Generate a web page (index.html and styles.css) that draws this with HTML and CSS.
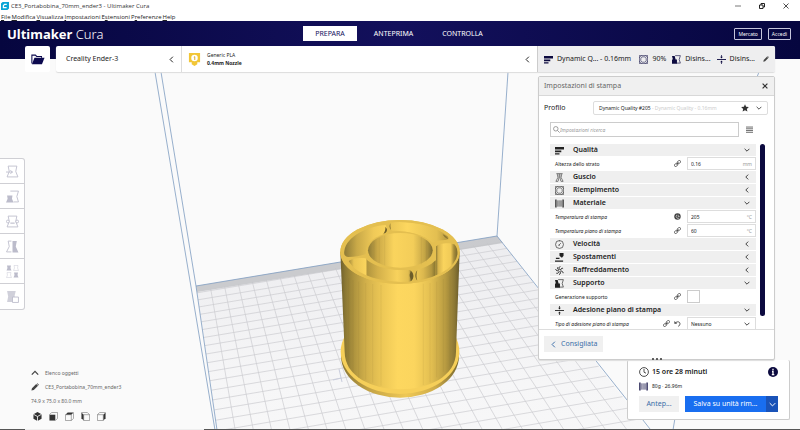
FILE: index.html
```html
<!DOCTYPE html>
<html lang="it">
<head>
    <meta charset="UTF-8">
    <meta name="viewport" content="width=device-width, initial-scale=1.0">
    <title>CE3_Portabobina_70mm_ender3 - Ultimaker Cura</title>
    <link rel="stylesheet" href="styles.css">
</head>
<body>
    <!-- Icons -->
    <svg class="sprite" aria-hidden="true">
        <symbol id="left" viewBox="0 0 10 10"><path d="M7 1 3 5l4 4" fill="none" stroke="currentColor" stroke-width="1.4"/></symbol>
        <symbol id="down" viewBox="0 0 10 10"><path d="M1 3l4 4 4-4" fill="none" stroke="currentColor" stroke-width="1.4"/></symbol>
        <symbol id="up" viewBox="0 0 10 10"><path d="M1 7l4-4 4 4" fill="none" stroke="currentColor" stroke-width="1.6"/></symbol>
        <symbol id="quality" viewBox="0 0 10 10"><path d="M0 1h10v3H0zM0 5h7v2H0zM0 8h5v1.500H0z" fill="currentColor"/></symbol>
        <symbol id="shell" viewBox="0 0 10 10"><path d="M1.500.7h7M2.500 1l.7 4L1 9.300h2.500M7.500 1l-.7 4L9 9.300H6.500M4.500 1v4l-1 4M5.500 1v4l1 4" fill="none" stroke="currentColor" stroke-width=".6"/></symbol>
        <symbol id="infill" viewBox="0 0 10 10"><path d="M.5.5h9v9h-9zM.5 3 3 .5M7 .5 9.500 3M.5 7 3 9.500M7 9.500 9.500 7M3.500 2h3L8 4v2.500L6.500 8h-3L2 6.500V4z" fill="none" stroke="currentColor" stroke-width=".6"/></symbol>
        <symbol id="spool" viewBox="0 0 10 10"><path d="M1 .5v9M9 .5v9" stroke="currentColor" stroke-width="1.400"/><path d="M3 1.500v7M4.400 1.500v7M5.700 1.500v7M7 1.500v7" stroke="currentColor" stroke-width=".6"/></symbol>
        <symbol id="clock" viewBox="0 0 10 10"><circle cx="5" cy="5" r="4.400" fill="none" stroke="currentColor" stroke-width=".8"/><path d="M5 2v3.200l2 1" fill="none" stroke="currentColor" stroke-width=".8"/></symbol>
        <symbol id="speed" viewBox="0 0 10 10"><circle cx="5" cy="5" r="4.400" fill="none" stroke="currentColor" stroke-width=".7"/><path d="M4.500 5.500l2-2M3.500 5.800h2M5 .6v1" stroke="currentColor" stroke-width=".7"/></symbol>
        <symbol id="travel" viewBox="0 0 10 10"><path d="M5 0h4.500v3L8 5H7L5 3z" fill="currentColor"/><path d="M1 6h4M0 9h9" stroke="currentColor" stroke-width="1.200"/></symbol>
        <symbol id="cooling" viewBox="0 0 10 10"><path d="M5 4C4 2 4.500 1 6 .5M6 4.500C7 2.500 8 2 9 3M6 5.500c2 0 3 1 3 2.500M5.500 6c1 1.500.5 3-1 3.500M4.500 6C4 8 2.500 8.500 1.500 8M4 5.200C2 5.500 1 5 .8 3.500M4.200 4.400C2.800 3.500 2.500 2.500 3 1.500" fill="none" stroke="currentColor" stroke-width="1.100"/></symbol>
        <symbol id="support" viewBox="0 0 10 10"><path d="M3.500.7h5.800L8 5l1.300 4H5" fill="none" stroke="currentColor" stroke-width=".7"/><path d="M0 1h3l1 4h1.500v4.700H0V5h1z" fill="currentColor"/></symbol>
        <symbol id="adhesion" viewBox="0 0 10 10"><path d="M0 5h10" stroke="currentColor"/><path d="M5 0v3M5 7v3" stroke="currentColor" stroke-width=".8"/><path d="M3.500 2h3L5 3.800zM3.500 8h3L5 6.200z" fill="currentColor"/></symbol>
        <symbol id="link" viewBox="0 0 10 10"><g fill="none" stroke="currentColor" stroke-width="1.200" transform="rotate(-45 5 5)"><rect x="-.5" y="3.200" width="5" height="3.600" rx="1.800"/><rect x="5.500" y="3.200" width="5" height="3.600" rx="1.800"/><path d="M3 5h4"/></g></symbol>
        <symbol id="pencil" viewBox="0 0 10 10"><path d="M.5 9.500 1.200 6.500 6.500 1.200l2.300 2.300-5.300 5.300zM7.200.7l.7-.5 2 2-.6.8z" fill="currentColor"/></symbol>
        <symbol id="undo" viewBox="0 0 10 10"><path d="M2 4.500C4 1.500 9 2 8.500 6 8.300 7.500 7.500 8.500 6 9" fill="none" stroke="currentColor" stroke-width="1.300"/><path d="M.5 1.500v4h4z" fill="currentColor"/></symbol>
        <symbol id="globe" viewBox="0 0 10 10"><circle cx="5" cy="5" r="4.600" fill="currentColor"/><path d="M4 2.500 3 5l1.500 2.500h3M6 2.500V5h2" fill="none" stroke="#fff" stroke-width=".8"/></symbol>
        <symbol id="star" viewBox="0 0 10 10"><path d="M5 .3l1.400 3.100 3.400.4-2.500 2.300.7 3.400L5 7.800 2 9.500l.7-3.400L.2 3.800l3.400-.4z" fill="currentColor"/></symbol>
        <symbol id="close" viewBox="0 0 10 10"><path d="M1 1l8 8M9 1 1 9" stroke="currentColor" stroke-width="2"/></symbol>
        <symbol id="menu" viewBox="0 0 10 10"><path d="M0 1.500h10M0 4h10M0 6.500h10M0 9h10" stroke="currentColor" stroke-width="1.100"/></symbol>
        <symbol id="part" viewBox="0 0 12 12"><path d="M2 1h8L9 6l2 5H1l2-5z" fill="none" stroke="currentColor" stroke-width=".8"/></symbol>
        <symbol id="part-solid" viewBox="0 0 12 12"><path d="M2 1h8L9 6l2 5H1l2-5z" fill="currentColor"/></symbol>
    </svg>

    <!-- Window frame -->
    <div class="titlebar">
        <svg class="app-icon" viewBox="0 0 10 10"><path d="M2 0h8v8L8 10H0V2z" fill="#0aa5d6"/><path d="M7.200 3H4.500L3 4.500V7h4" fill="none" stroke="#fff" stroke-width="1.500"/></svg>
        <span class="window-title">CE3_Portabobina_70mm_ender3 - Ultimaker Cura</span>
        <div class="window-buttons">
            <button aria-label="Riduci"><svg viewBox="0 0 6 6"><path d="M0 3h6" stroke="#555" stroke-width=".8"/></svg></button>
            <button aria-label="Ripristina"><svg viewBox="0 0 6 6"><path d="M.5 2h3.500v3.500H.5zM2 2V.5h3.500V4H4" fill="none" stroke="#222"/></svg></button>
            <button aria-label="Chiudi"><svg viewBox="0 0 6 6"><path d="M.5.5l5 5M5.500.5l-5 5" stroke="#222" stroke-width=".8"/></svg></button>
        </div>
    </div>
    <nav class="menubar">
        <a href="#"><u>F</u>ile</a>
        <a href="#"><u>M</u>odifica</a>
        <a href="#"><u>V</u>isualizza</a>
        <a href="#"><u>I</u>mpostazioni</a>
        <a href="#">E<u>s</u>tensioni</a>
        <a href="#">P<u>r</u>eferenze</a>
        <a href="#"><u>H</u>elp</a>
    </nav>

    <header class="header">
        <h1 class="logo">Ultimaker <span>Cura</span></h1>
        <div class="stages">
            <button class="stage active">PREPARA</button>
            <button class="stage">ANTEPRIMA</button>
            <button class="stage">CONTROLLA</button>
        </div>
        <div class="account">
            <button>Mercato</button>
            <button>Accedi</button>
        </div>
    </header>

    <!-- 3D view -->
    <svg class="scene" viewBox="0 0 800 358" preserveAspectRatio="xMinYMin slice">
        <defs>
            <linearGradient id="body">
                <stop offset="0" stop-color="#6e5f2c"/>
                <stop offset=".04" stop-color="#8a7733"/>
                <stop offset=".12" stop-color="#b0953f"/>
                <stop offset=".22" stop-color="#d3b14b"/>
                <stop offset=".34" stop-color="#ebc655"/>
                <stop offset=".48" stop-color="#fdd75f"/>
                <stop offset=".62" stop-color="#fbd55e"/>
                <stop offset=".76" stop-color="#e3bf51"/>
                <stop offset=".88" stop-color="#b89b41"/>
                <stop offset=".96" stop-color="#8a7634"/>
                <stop offset="1" stop-color="#67592a"/>
            </linearGradient>
            <linearGradient id="hole">
                <stop offset="0" stop-color="#8d7a36"/>
                <stop offset=".15" stop-color="#cba947"/>
                <stop offset=".4" stop-color="#fad45d"/>
                <stop offset=".7" stop-color="#f3cd59"/>
                <stop offset=".88" stop-color="#c3a445"/>
                <stop offset="1" stop-color="#7c6b30"/>
            </linearGradient>
            <linearGradient id="pocket-left">
                <stop offset="0" stop-color="#8d7a36"/>
                <stop offset=".3" stop-color="#c9a948"/>
                <stop offset=".7" stop-color="#f0ca58"/>
                <stop offset="1" stop-color="#fad45d"/>
            </linearGradient>
            <linearGradient id="pocket-far">
                <stop offset="0" stop-color="#e9c453"/>
                <stop offset=".3" stop-color="#fdd75f"/>
                <stop offset=".8" stop-color="#e3bf51"/>
                <stop offset="1" stop-color="#b4973f"/>
            </linearGradient>
            <linearGradient id="pocket-right">
                <stop offset="0" stop-color="#8f7b36"/>
                <stop offset=".1" stop-color="#d8b44c"/>
                <stop offset=".35" stop-color="#fad45d"/>
                <stop offset=".68" stop-color="#f0ca57"/>
                <stop offset=".82" stop-color="#a68c3b"/>
                <stop offset="1" stop-color="#77672e"/>
            </linearGradient>
            <linearGradient id="pocket-front">
                <stop offset="0" stop-color="#a68c3b"/>
                <stop offset=".08" stop-color="#e9c453"/>
                <stop offset=".26" stop-color="#fad45d"/>
                <stop offset=".29" stop-color="#b2963f"/>
                <stop offset=".45" stop-color="#d3b04a"/>
                <stop offset=".75" stop-color="#f8d25c"/>
                <stop offset=".92" stop-color="#e3bf51"/>
                <stop offset="1" stop-color="#7b6a30"/>
            </linearGradient>
            <linearGradient id="pocket-near">
                <stop offset="0" stop-color="#f0ca57"/>
                <stop offset=".4" stop-color="#dcb84e"/>
                <stop offset=".8" stop-color="#b2963f"/>
                <stop offset="1" stop-color="#85732f"/>
            </linearGradient>
            <linearGradient id="flange">
                <stop offset="0" stop-color="#8a7634"/>
                <stop offset=".25" stop-color="#c6a546"/>
                <stop offset=".55" stop-color="#eec856"/>
                <stop offset=".8" stop-color="#cfac49"/>
                <stop offset="1" stop-color="#77672e"/>
            </linearGradient>
            <linearGradient id="floor" x1="0" y1="0" x2="0" y2="1">
                <stop offset="0" stop-color="#ececef"/>
                <stop offset=".5" stop-color="#f6f6f7"/>
                <stop offset="1" stop-color="#fafafa"/>
            </linearGradient>
        </defs>
        <g transform="translate(0 -72)">
            <path d="M196 286 497 236 668 455 232 530z" fill="url(#floor)"/>
            <g id="grid"></g>
            <path d="M196 286 497 236 503 243 197 292z" fill="#c3c4c8" opacity=".85"/>
            <g class="volume">
                <path d="M155 72 215 430M161 72l35 214M196 286l21 144M508 72l-11 164M196 286 497 236M497 236 654 434M759 72l-2 5M675 418l-2 12"/>
            </g>
            <path d="M333 380l8-2M339 369l3 13" stroke="#c9cddd" fill="none"/>

            <!-- Model, drawn on a three times larger canvas -->
            <g transform="translate(320 205) scale(.333333)">
                <ellipse cx="240" cy="453" rx="177" ry="125" fill="url(#flange)"/>
                <ellipse cx="240" cy="440" rx="178" ry="127" fill="#f6cf59"/>
                <path d="M61 140 74 440C74 590 408 590 408 440L419 140z" fill="url(#body)"/>
                <path d="M86 220v270M99 225v280M116 230v288M137 234v290M158 237v296M183 240v302M310 236v304M330 234v298M350 230v287M370 222v278M390 215v270" class="facets"/>

                <!-- Top face and the five openings -->
                <ellipse cx="240" cy="141" rx="179" ry="96" fill="#e4bf50"/>
                <path d="M197 60C145 64 80 92 73 138c-2 11 2 17 12 18 20 0 38-3 55-10l50-60c10-6 12-15 7-26z" fill="url(#pocket-left)"/>
                <path d="M196 66c6 5 7 11 1 17l-7 3c5-6 7-12 6-20z" fill="#6c5c29"/>
                <path d="M212 52c60-5 134 9 171 42 5 6 2 11-8 11-14 0-25 2-37 8-28-25-75-37-122-36-9-6-10-17-4-25z" fill="url(#pocket-far)"/>
                <path d="M212 54c-5 6-5 15 1 21-1-8-3-13-1-21zM368 88c9 4 16 10 17 15-8-3-14-8-17-15z" fill="#8b7633"/>
                <path d="M348 124c10-9 38-13 55-6 14 14 12 42 4 60-14 17-36 30-59 38z" fill="url(#pocket-right)"/>
                <path d="M86 168c12-9 34-11 50-8 18 20 58 34 104 35h30c13 8 14 26 0 36-70 2-156-13-184-63z" fill="url(#pocket-front)"/>
                <path d="M272 197c10 9 11 24 0 32 1-10-4-14-3-20 1-5 3-7 3-12z" fill="#6c5c29"/>
                <path d="M292 194c20-4 39-13 55-28v50c-18 8-36 12-53 13-12-10-11-25-2-35z" fill="url(#pocket-near)"/>
                <path d="M292 196c-8 8-9 22 0 31-3-9-3-22 0-31z" fill="#8b7633"/>
                <ellipse cx="241" cy="138" rx="104" ry="57" fill="#e4bf50"/>
                <ellipse cx="241" cy="136" rx="97" ry="52" fill="url(#hole)"/>
                <path d="M162 110v52M178 99v75M194 92v89M304 96v82M319 105v65" class="facets"/>
                <ellipse cx="240" cy="141" rx="176" ry="93" fill="none" stroke="#e4bf50" stroke-width="6"/>
            </g>
        </g>
    </svg>

    <div class="toolbar">
        <button class="open-file" aria-label="Apri file">
            <svg viewBox="0 0 16 12"><path d="M1 10.500V1h4l1.500 1.500H12V4" fill="none" stroke="#0c0a4f" stroke-width="1.200"/><path d="M1 11.500 4 4h11.500l-3 7.500z" fill="#0c0a4f"/></svg>
        </button>
        <div class="config">
            <button class="printer">Creality Ender-3 <svg class="chevron"><use href="#left"/></svg></button>
            <button class="material">
                <svg class="extruder" viewBox="0 0 14 14"><path d="M1 0h12v10H10v2L7 14 4 12v-2H1z" fill="#f2c636"/><circle cx="7" cy="5.500" r="3.500" fill="#fff"/><path d="M6.300 4.500 7.300 4v3.500" fill="none" stroke="#d8a51d"/></svg>
                <span class="material-name">Generic PLA<b>0.4mm Nozzle</b></span>
                <svg class="chevron"><use href="#left"/></svg>
            </button>
            <button class="summary">
                <svg><use href="#quality"/></svg><span class="grow">Dynamic Q... - 0.16mm</span>
                <svg><use href="#infill"/></svg><span>90%</span>
                <svg><use href="#support"/></svg><span>Disins...</span>
                <svg><use href="#adhesion"/></svg><span>Disins...</span>
                <svg class="edit"><use href="#pencil"/></svg>
            </button>
        </div>
    </div>

    <main class="workspace">
        <div class="left">
            <div class="tools">
                <button aria-label="Sposta"><svg viewBox="0 0 12 12"><use href="#part"/><path d="M0 6.500h6M4 5l2 1.500L4 8" fill="none" stroke="currentColor" stroke-width=".8"/></svg></button>
                <button aria-label="Scala"><svg viewBox="0 0 12 12"><path d="M4 1h7.500L10 6l1.500 5H7" fill="none" stroke="currentColor" stroke-width=".8"/><path d="M1 5h5l-.5 3L7 11.500H0L1.500 8z" fill="currentColor"/></svg></button>
                <button aria-label="Ruota"><svg viewBox="0 0 12 12"><use href="#part"/><g fill="#fff" stroke="currentColor" stroke-width=".8"><circle cx="1.700" cy="6" r="1.300"/><circle cx="10.300" cy="6" r="1.300"/></g><path d="M4 7.500h4" stroke="currentColor"/></svg></button>
                <button aria-label="Rifletti"><svg viewBox="0 0 12 12"><path d="M5 1H2l1 5-2.500 5H5" fill="none" stroke="currentColor" stroke-width=".8"/><path d="M6 1h4L9 6l2.500 5.500H6z" fill="currentColor"/></svg></button>
                <button aria-label="Impostazioni per modello"><svg viewBox="0 0 12 12"><use href="#part-solid" width="5.500" height="5.500"/><use href="#part" x="6.500" width="5.500" height="5.500"/><use href="#part" y="6.500" width="5.500" height="5.500"/><use href="#part-solid" x="6.500" y="6.500" width="5.500" height="5.500"/></svg></button>
                <button aria-label="Blocco supporto"><svg viewBox="0 0 12 12"><path d="M1 1h8L8 5v6H1l1-5z" fill="currentColor" opacity=".7"/><path d="M6 6.500h5.500v5H6z" fill="#fff" stroke="currentColor" stroke-width=".8"/></svg></button>
            </div>
            <div class="objects">
                <button class="object-list"><svg><use href="#up"/></svg>Elenco oggetti</button>
                <button class="object-name"><svg><use href="#pencil"/></svg>CE3_Portabobina_70mm_ender3</button>
                <p>74.9 x 75.0 x 80.0 mm</p>
                <div class="views">
                    <button aria-label="Vista 3D"><svg viewBox="0 0 10 10"><path d="M5 0l4.500 2.500v5L5 10 .5 7.500v-5z" fill="#333"/><path d="M.5 2.500 5 5l4.500-2.500M5 5v5" fill="none" stroke="#fff" stroke-width=".9"/></svg></button>
                    <button aria-label="Vista frontale"><svg viewBox="0 0 10 10"><path d="M.5 3h6.500v6.500H.5z" fill="#333"/><path d="M.5 3 3 .5h6.500V7L7 9.500" fill="none" stroke="#777" stroke-width=".7"/></svg></button>
                    <button aria-label="Vista dall'alto"><svg viewBox="0 0 10 10"><path d="M.5 3 3 .5h6.500L7 3z" fill="#333"/><path d="M.5 3h6.500v6.500H.5zM9.500.5V7L7 9.500" fill="none" stroke="#777" stroke-width=".7"/></svg></button>
                    <button aria-label="Vista sinistra"><svg viewBox="0 0 10 10"><path d="M.5.5 3 3v6.500L.5 7z" fill="#333"/><path d="M3 3h6.500v6.500H3zM.5.5h6.500L9.500 3" fill="none" stroke="#777" stroke-width=".7"/></svg></button>
                    <button aria-label="Vista destra"><svg viewBox="0 0 10 10"><path d="M9.500.5 7 3v6.500L9.500 7z" fill="#333"/><path d="M.5 3h6.500v6.500H.5zM.5 3 3 .5h6.500" fill="none" stroke="#777" stroke-width=".7"/></svg></button>
                </div>
            </div>
        </div>

        <div class="right">
            <section class="settings">
                <div class="settings-head">
                    <h2>Impostazioni di stampa</h2>
                    <button aria-label="Chiudi impostazioni"><svg><use href="#close"/></svg></button>
                </div>
                <div class="profile">
                    <span>Profilo</span>
                    <button class="profile-select">
                        <span>Dynamic Quality #205 <i>- Dynamic Quality - 0.16mm</i></span>
                        <svg class="star"><use href="#star"/></svg>
                        <svg><use href="#down"/></svg>
                    </button>
                </div>
                <div class="search">
                    <div class="search-box">
                        <svg viewBox="0 0 10 10"><circle cx="4" cy="4" r="3.200" fill="none" stroke="#777"/><path d="M6.500 6.500 9.500 9.500" stroke="#777"/></svg>
                        <input type="text" aria-label="Impostazioni ricerca" placeholder="Impostazioni ricerca">
                    </div>
                    <button aria-label="Visibilità impostazioni"><svg><use href="#menu"/></svg></button>
                </div>
                <div class="list-wrap">
                    <div class="list">
                        <button class="category"><svg><use href="#quality"/></svg>Qualità<svg class="chevron"><use href="#down"/></svg></button>
                        <div class="setting upright">
                            <label for="layer">Altezza dello strato</label>
                            <svg><use href="#link"/></svg>
                            <div class="field"><input id="layer" type="text" value="0.16"><span>mm</span></div>
                        </div>
                        <button class="category"><svg><use href="#shell"/></svg>Guscio<svg class="chevron"><use href="#left"/></svg></button>
                        <button class="category"><svg><use href="#infill"/></svg>Riempimento<svg class="chevron"><use href="#left"/></svg></button>
                        <button class="category"><svg><use href="#spool"/></svg>Materiale<svg class="chevron"><use href="#down"/></svg></button>
                        <div class="setting">
                            <label for="temp">Temperatura di stampa</label>
                            <svg><use href="#globe"/></svg>
                            <div class="field"><input id="temp" type="text" value="205"><span>°C</span></div>
                        </div>
                        <div class="setting">
                            <label for="bed">Temperatura piano di stampa</label>
                            <svg><use href="#link"/></svg>
                            <div class="field"><input id="bed" type="text" value="60"><span>°C</span></div>
                        </div>
                        <button class="category"><svg><use href="#speed"/></svg>Velocità<svg class="chevron"><use href="#left"/></svg></button>
                        <button class="category"><svg><use href="#travel"/></svg>Spostamenti<svg class="chevron"><use href="#left"/></svg></button>
                        <button class="category"><svg><use href="#cooling"/></svg>Raffreddamento<svg class="chevron"><use href="#left"/></svg></button>
                        <button class="category"><svg><use href="#support"/></svg>Supporto<svg class="chevron"><use href="#down"/></svg></button>
                        <div class="setting upright">
                            <label for="gen">Generazione supporto</label>
                            <svg><use href="#link"/></svg>
                            <div class="check"><input id="gen" type="checkbox"></div>
                        </div>
                        <button class="category"><svg><use href="#adhesion"/></svg>Adesione piano di stampa<svg class="chevron"><use href="#down"/></svg></button>
                        <div class="setting">
                            <label for="adh">Tipo di adesione piano di stampa</label>
                            <svg><use href="#link"/></svg>
                            <svg><use href="#undo"/></svg>
                            <div class="field">
                                <select id="adh"><option>Nessuno</option></select>
                                <svg class="chevron"><use href="#down"/></svg>
                            </div>
                        </div>
                    </div>
                    <div class="scrollbar"></div>
                </div>
                <div class="settings-foot">
                    <button><svg><use href="#left"/></svg>Consigliata</button>
                    <span class="grip"><i></i><i></i><i></i></span>
                </div>
            </section>

            <section class="action">
                <div class="estimate">
                    <svg><use href="#clock"/></svg>
                    <b>15 ore 28 minuti</b>
                    <svg class="info" viewBox="0 0 10 10"><circle cx="5" cy="5" r="5" fill="#0c0a3f"/><path d="M5 1.800v1.500M4 4.500h1v3M3.800 7.700h2.500" fill="none" stroke="#fff" stroke-width="1.300"/></svg>
                </div>
                <div class="usage"><svg><use href="#spool"/></svg>80g · 26.96m</div>
                <div class="action-buttons">
                    <button class="preview">Antep...</button>
                    <div class="save">
                        <button>Salva su unità rim...</button>
                        <button class="more" aria-label="Altre uscite"><svg><use href="#down"/></svg></button>
                    </div>
                </div>
            </section>
        </div>
    </main>
    <div class="taskbar"></div>

    <script>
        // Corners of the build plate: back left, back right, front right, front left
        const plate = [[196, 286], [497, 236], [668, 455], [232, 530]];
        const columns = 22;
        const rows = 25;

        // Perspective mapping of the unit square onto the plate
        const [[x0, y0], [x1, y1], [x2, y2], [x3, y3]] = plate;
        const sx = x0 - x1 + x2 - x3, sy = y0 - y1 + y2 - y3;
        const den = (x1 - x2) * (y3 - y2) - (x3 - x2) * (y1 - y2);
        const g = (sx * (y3 - y2) - (x3 - x2) * sy) / den;
        const h = ((x1 - x2) * sy - sx * (y1 - y2)) / den;

        function project(u, v) {
            const w = g * u + h * v + 1;
            const x = ((x1 - x0 + g * x1) * u + (x3 - x0 + h * x3) * v + x0) / w;
            const y = ((y1 - y0 + g * y1) * u + (y3 - y0 + h * y3) * v + y0) / w;
            return x.toFixed(1) + ' ' + y.toFixed(1);
        }

        let d = '';
        for (let i = 1; i < columns; i++) {
            d += 'M' + project(i / columns, 0.03) + 'L' + project(i / columns, 1);
        }
        for (let i = 1; i < rows; i++) {
            d += 'M' + project(0, i / rows) + 'L' + project(1, i / rows);
        }
        const lines = document.createElementNS('http://www.w3.org/2000/svg', 'path');
        lines.setAttribute('d', d);
        document.getElementById('grid').appendChild(lines);
    </script>
</body>
</html>
```

FILE: styles.css
```css
* {
    box-sizing: border-box;
}

body {
    margin: 0;
    min-height: 100vh;
    display: flex;
    flex-direction: column;
    position: relative;
    overflow: hidden;
    background-color: #fafafa;
    color: #222;
    font-family: "Noto Sans", sans-serif;
    font-size: 7px;
    line-height: 10px;
}

button, input, select {
    font: inherit;
    color: inherit;
    margin: 0;
    padding: 0;
    border: 0;
    background: none;
    cursor: pointer;
}

a {
    color: inherit;
    text-decoration: none;
}

svg {
    display: block;
    flex: none;
    width: 9px;
    height: 9px;
}

h1, h2, p {
    margin: 0;
    font-weight: normal;
}

.sprite {
    position: absolute;
    width: 0;
    height: 0;
}

.chevron {
    width: 7px;
    height: 7px;
    margin-left: auto;
}

/* Window frame */
.titlebar {
    display: flex;
    align-items: center;
    gap: 2px;
    height: 12px;
    padding-left: 1px;
    background-color: #fff;
    color: #333;
    font-family: "Open Sans", sans-serif;
    font-size: 6px;
}

.app-icon {
    width: 8px;
    height: 8px;
}

.window-buttons {
    display: flex;
    margin-left: auto;
    padding-right: 2px;
}

.window-buttons button {
    width: 24px;
    height: 12px;
    display: flex;
    align-items: center;
    justify-content: center;
}

.window-buttons svg {
    width: 6px;
    height: 6px;
}

.menubar {
    display: flex;
    align-items: center;
    gap: 1px;
    height: 9px;
    padding-left: 1px;
    background-color: #fff;
    font-family: "Open Sans", sans-serif;
    font-size: 6px;
}

/* Header */
.header {
    display: grid;
    grid-template-columns: 1fr auto 1fr;
    align-items: start;
    height: 38px;
    padding: 5px 9px 0 7px;
    background: linear-gradient(90deg, #06063f, #13105c 50%, #06063f);
    color: #fff;
}

.logo {
    font-size: 13px;
    line-height: 16px;
    font-weight: bold;
}

.logo span {
    font-weight: 300;
}

.stages {
    display: flex;
    gap: 5px;
}

.stage {
    height: 15px;
    padding: 0 12px;
}

.stage.active {
    background-color: #fff;
    color: #13105c;
}

.account {
    display: flex;
    justify-content: flex-end;
    gap: 6px;
    padding-top: 2px;
    font-size: 5px;
}

.account button {
    height: 12px;
    padding: 0 3px;
    border: 1px solid #c5c5dc;
    border-radius: 1px;
}

/* 3D view */
.scene {
    position: absolute;
    top: 72px;
    left: 0;
    width: 100%;
    height: calc(100% - 72px);
}

#grid {
    fill: none;
    stroke: #cbccd0;
    stroke-width: .7;
}

.volume {
    fill: none;
    stroke: #7d9cc0;
    stroke-width: .8;
}

.facets {
    fill: none;
    stroke: #7a6830;
    stroke-width: 2;
    opacity: .14;
}

/* Toolbar */
.toolbar {
    position: relative;
    display: flex;
    gap: 6px;
    height: 26px;
    margin: -13px 25px 0;
}

.open-file {
    display: flex;
    align-items: center;
    justify-content: center;
    width: 25px;
    background-color: #fff;
    border-radius: 2px;
}

.open-file svg {
    width: 14px;
    height: 11px;
}

.config {
    flex: 1;
    display: flex;
    background-color: #fff;
    border-radius: 2px;
    box-shadow: 0 1px 1px #dcdcdc;
}

.config button {
    display: flex;
    align-items: center;
    text-align: left;
}

.printer {
    width: 126px;
    padding: 0 6px 0 10px;
    border-right: 1px solid #ddd;
}

.material {
    flex: 1;
    gap: 6px;
    padding: 0 6px;
}

.extruder {
    width: 13px;
    height: 13px;
}

.material-name {
    display: flex;
    flex-direction: column;
    font-size: 5px;
    line-height: 8px;
}

.summary {
    width: 238px;
    gap: 4px;
    padding: 0 6px 0 6px;
    border-left: 1px solid #ccc;
    border-radius: 0 2px 2px 0;
    background-color: #eeeeef;
}

.summary svg {
    color: #0c0a3f;
}

.summary span {
    margin-right: 2px;
}

.summary .grow {
    flex: 1;
    white-space: nowrap;
}

.summary .edit {
    width: 6px;
    height: 6px;
    margin-left: 2px;
    color: #444;
}

/* Workspace */
.workspace {
    position: relative;
    flex: 1;
    display: flex;
    justify-content: space-between;
}

.left {
    display: flex;
    flex-direction: column;
    justify-content: space-between;
    align-items: flex-start;
    padding: 86px 0 8px;
}

.tools {
    border: 1px solid #cfcfd4;
    border-left: 0;
    border-radius: 0 3px 3px 0;
    background-color: #fff;
    color: #bcbccb;
}

.tools button {
    display: flex;
    align-items: center;
    justify-content: center;
    width: 24px;
    height: 25px;
    border-bottom: 1px solid #cfcfd4;
}

.tools button:last-child {
    border-bottom: 0;
}

.tools svg {
    width: 13px;
    height: 13px;
}

.objects {
    display: flex;
    flex-direction: column;
    gap: 4px;
    padding-left: 31px;
    color: #666;
    font-size: 5px;
}

.objects > button {
    display: flex;
    align-items: center;
    gap: 6px;
    height: 10px;
}

.objects > button svg {
    width: 8px;
    height: 8px;
    color: #444;
}

.views {
    display: flex;
    gap: 7px;
    padding: 2px 0 0 2px;
}

/* Print settings */
.right {
    display: flex;
    flex-direction: column;
    align-items: flex-end;
    padding-top: 4px;
}

.settings {
    position: relative;
    z-index: 1;
    width: 237px;
    margin-right: 25px;
    border: 1px solid #ccc;
    border-radius: 2px;
    background-color: #fff;
    box-shadow: 0 1px 1px #ddd;
}

.settings-head {
    display: flex;
    align-items: center;
    justify-content: space-between;
    height: 19px;
    padding: 0 6px 0 5px;
    border-bottom: 1px solid #d8d8d8;
    background-color: #f0f0f0;
    color: #666;
}

.settings-head h2 {
    font-size: 7px;
}

.settings-head svg {
    width: 6px;
    height: 6px;
    color: #333;
}

.profile {
    display: flex;
    align-items: center;
    justify-content: space-between;
    padding: 5px 6px 0 5px;
}

.profile-select {
    display: flex;
    align-items: center;
    gap: 7px;
    width: 175px;
    height: 14px;
    padding: 0 5px;
    border: 1px solid #ddd;
    border-radius: 2px;
    font-size: 5px;
}

.profile-select span {
    flex: 1;
    text-align: left;
}

.profile-select i {
    color: #ccc;
    font-style: normal;
}

.profile-select svg {
    width: 6px;
    height: 6px;
    color: #333;
}

.profile-select .star {
    width: 8px;
    height: 8px;
}

.search {
    display: flex;
    align-items: center;
    gap: 7px;
    padding: 7px 11px 0;
}

.search svg {
    width: 7px;
    height: 7px;
    color: #444;
}

.search-box {
    display: flex;
    align-items: center;
    width: 189px;
    height: 15px;
    padding: 0 2px;
    border: 1px solid #ccc;
}

.search-box input {
    flex: 1;
    font-size: 5px;
    font-style: italic;
    outline: none;
}

.search-box input::placeholder {
    color: #999;
}

.list-wrap {
    display: flex;
    justify-content: space-between;
    margin-top: 7px;
    padding: 0 9px 0 11px;
}

.list {
    width: 206px;
    height: 185px;
    overflow: hidden;
}

.category {
    display: flex;
    align-items: center;
    gap: 9px;
    width: 100%;
    height: 12px;
    margin-bottom: 1px;
    padding: 0 6px 0 5px;
    background-color: #efefef;
    font-weight: 600;
}

.category svg {
    color: #222;
}

.category .chevron,
.field .chevron {
    width: 6px;
    height: 6px;
}

.setting {
    display: flex;
    align-items: center;
    gap: 4px;
    height: 13px;
    margin-bottom: 1px;
    padding-left: 5px;
    font-size: 5px;
    font-style: italic;
}

.setting.upright {
    font-style: normal;
}

.setting label {
    flex: 1;
}

.setting > svg {
    width: 7px;
    height: 7px;
    color: #444;
}

.field {
    display: flex;
    align-items: center;
    width: 69px;
    height: 13px;
    margin-left: 2px;
    padding: 0 3px;
    border: 1px solid #ddd;
    font-style: normal;
}

.field input {
    flex: 1;
    min-width: 0;
}

.field span {
    color: #999;
}

.field select {
    flex: 1;
    appearance: none;
}

.field .chevron {
    margin-right: 2px;
}

.check {
    width: 69px;
    margin-left: 2px;
}

.check input {
    display: block;
    appearance: none;
    width: 13px;
    height: 13px;
    border: 1px solid #ccc;
    background-color: #fff;
}

.scrollbar {
    width: 5px;
    height: 172px;
    border-radius: 3px;
    background-color: #0c0a3f;
}

.settings-foot {
    height: 30px;
    padding: 6px 5px;
    border-top: 1px solid #ddd;
}

.settings-foot button {
    display: flex;
    align-items: center;
    gap: 4px;
    height: 16px;
    padding: 0 6px;
    background-color: #f0f0f0;
    color: #3a6ea8;
}

.settings-foot svg {
    width: 7px;
    height: 7px;
}

.grip {
    position: absolute;
    bottom: -1px;
    left: 50%;
    display: flex;
    gap: 2px;
    margin-left: -5px;
}

.grip i {
    width: 2px;
    height: 2px;
    border-radius: 50%;
    background-color: #333;
}

/* Slice result and output */
.action {
    width: 163px;
    margin-right: 10px;
    padding: 7px 11px;
    border: 1px solid #ccc;
    border-top: 0;
    border-radius: 2px;
    background-color: #fff;
}

.estimate {
    display: flex;
    align-items: center;
    gap: 3px;
}

.estimate b {
    font-weight: 600;
}

.estimate svg {
    width: 10px;
    height: 10px;
}

.estimate .info {
    margin-left: auto;
}

.usage {
    display: flex;
    align-items: center;
    gap: 4px;
    margin-top: 4px;
    font-size: 5px;
}

.usage svg {
    color: #0c0a3f;
}

.action-buttons {
    display: flex;
    gap: 6px;
    height: 16px;
    margin-top: 5px;
}

.preview {
    width: 40px;
    background-color: #f0f0f0;
    color: #3a6ea8;
}

.save {
    flex: 1;
    display: flex;
    background-color: #196ef0;
    color: #fff;
}

.save button {
    flex: 1;
}

.save .more {
    flex: none;
    width: 12px;
    display: flex;
    align-items: center;
    justify-content: center;
    background-color: #1a53b8;
}

.save svg {
    width: 7px;
    height: 7px;
}

.taskbar {
    position: relative;
    height: 1px;
    background: linear-gradient(90deg, #555 25px, #eee 25px, #eee 204px, #555 204px);
}
```
